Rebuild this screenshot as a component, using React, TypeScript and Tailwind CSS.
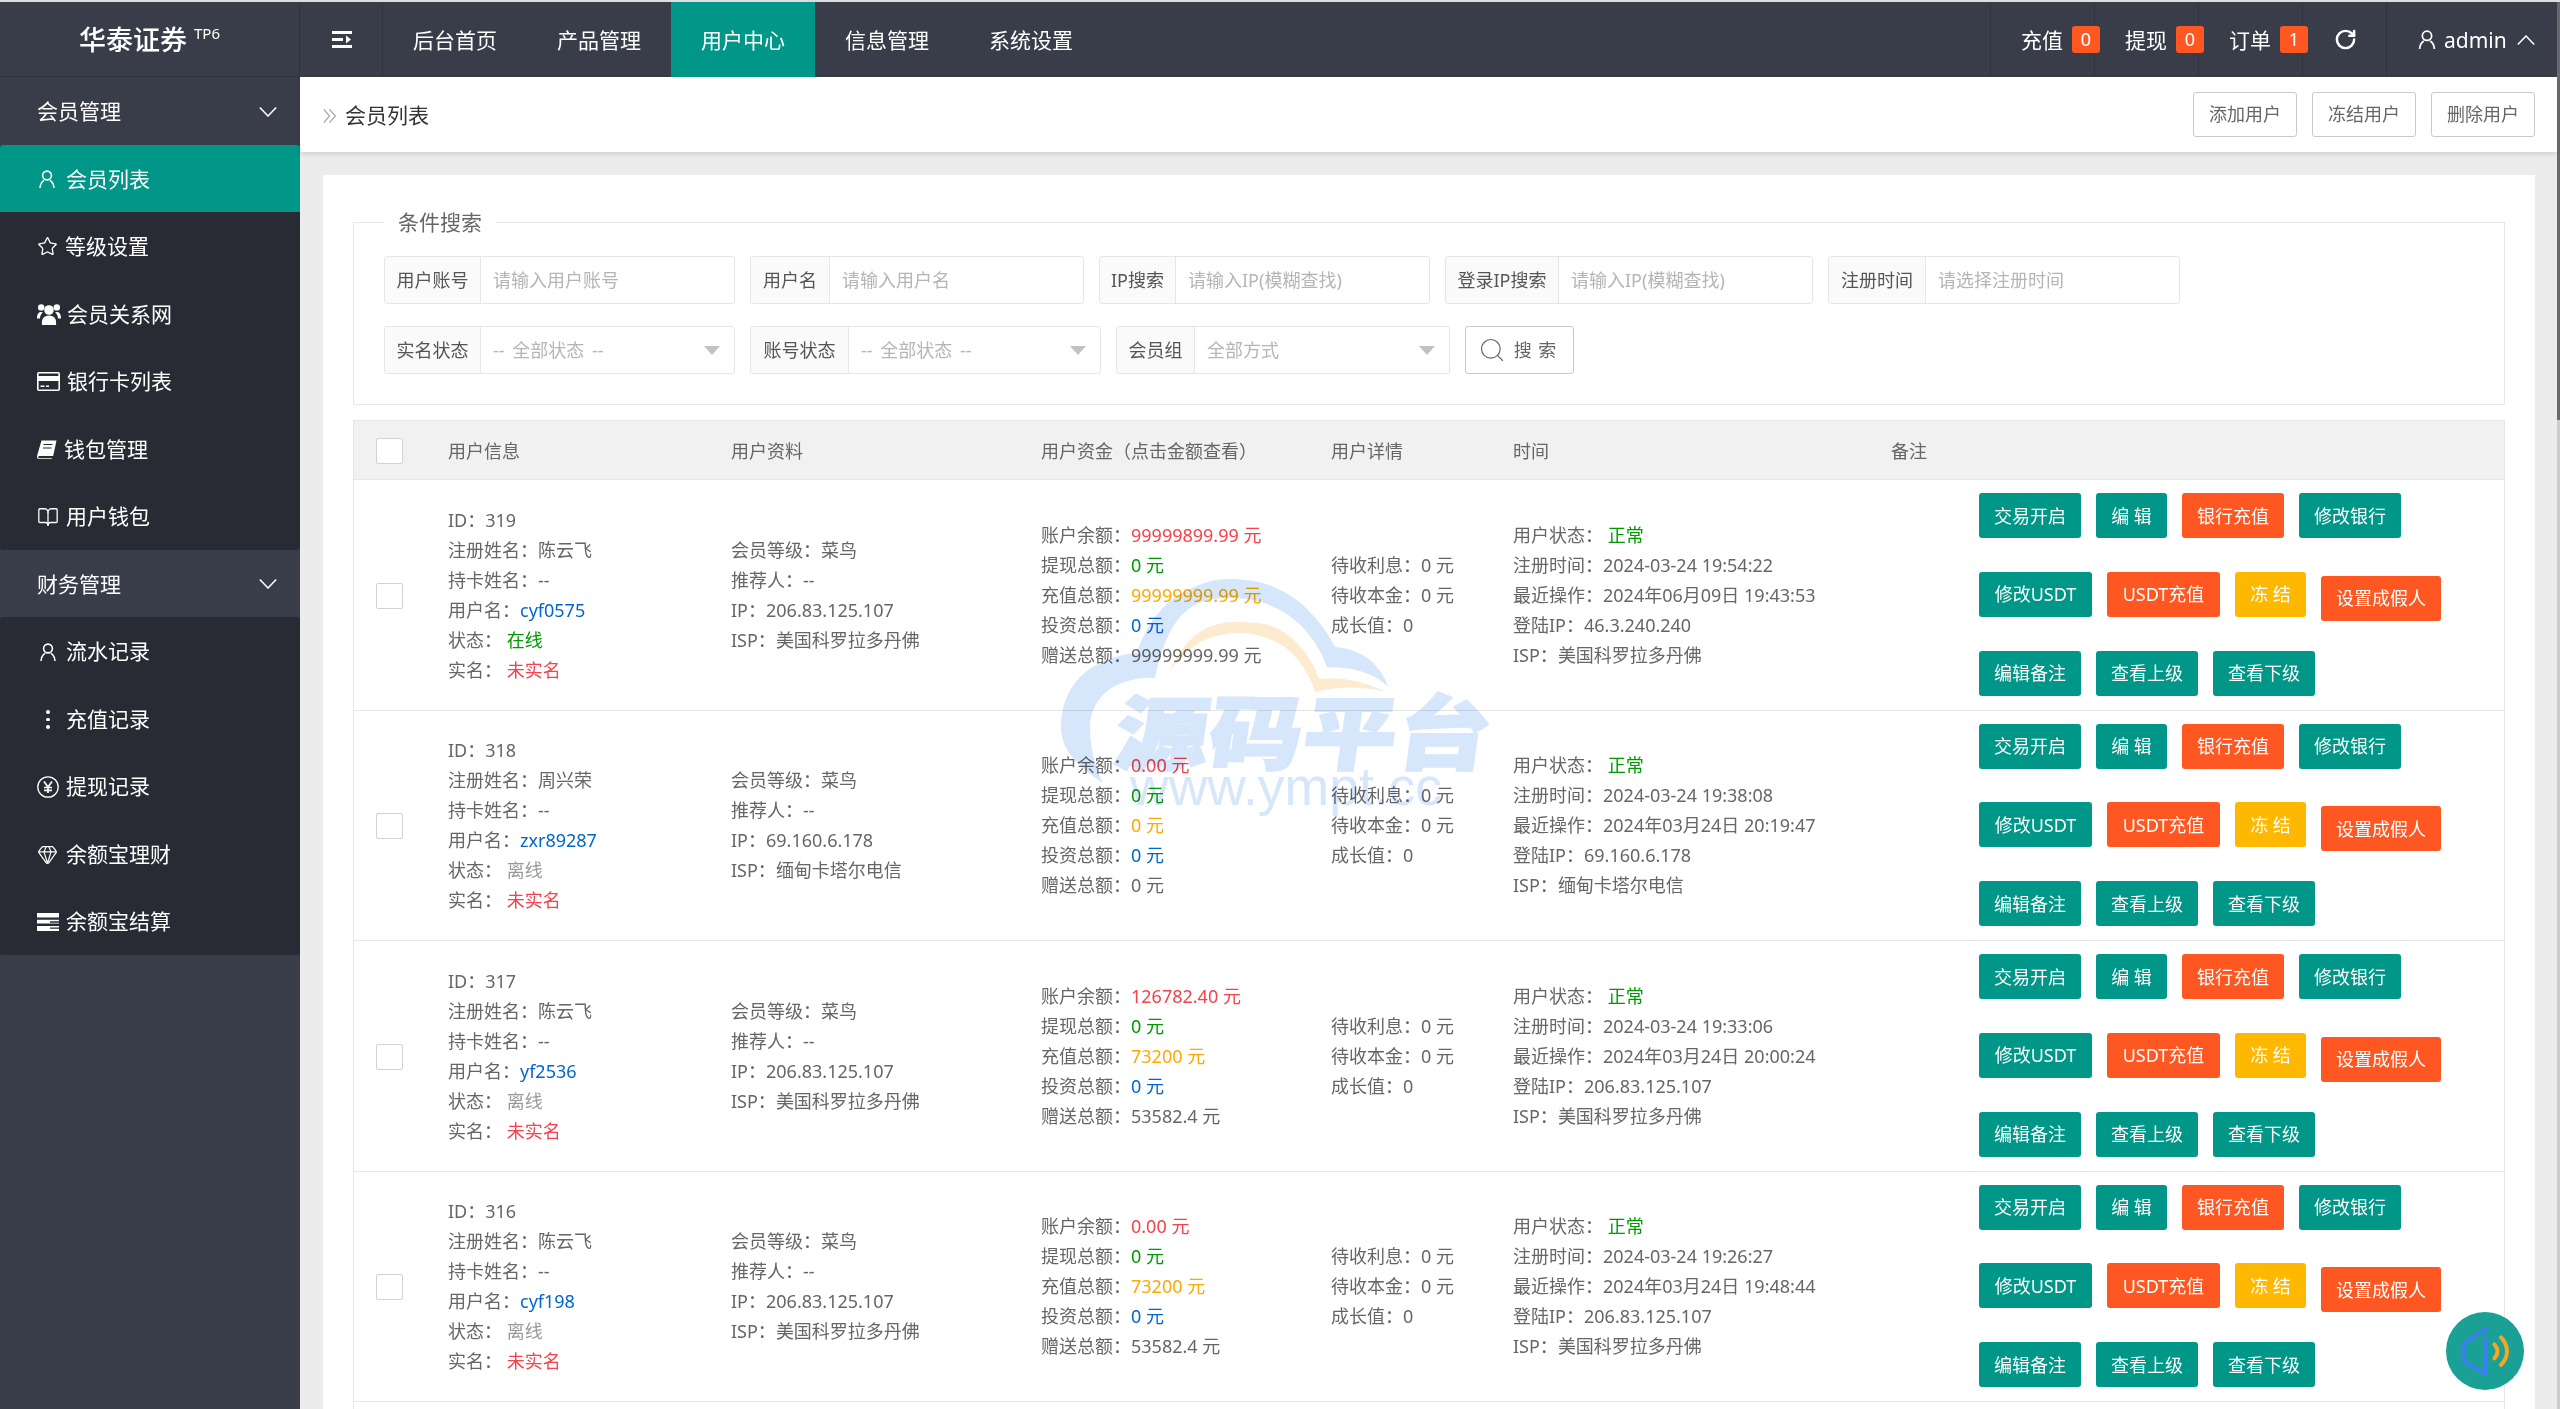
import { BookOpen, Gem, RotateCw, Search, Star } from 'lucide-react';
import type { ReactNode } from 'react';

type Member = {
  id: number;
  name: string;
  username: string;
  online: boolean;
  ip: string;
  isp: string;
  balance: string;
  deposit: string;
  gift: string;
  registered: string;
  lastAction: string;
  loginIp: string;
};

const members: Member[] = [
  {
    id: 319,
    name: '陈云飞',
    username: 'cyf0575',
    online: true,
    ip: '206.83.125.107',
    isp: '美国科罗拉多丹佛',
    balance: '99999899.99',
    deposit: '99999999.99',
    gift: '99999999.99',
    registered: '2024-03-24 19:54:22',
    lastAction: '2024年06月09日 19:43:53',
    loginIp: '46.3.240.240',
  },
  {
    id: 318,
    name: '周兴荣',
    username: 'zxr89287',
    online: false,
    ip: '69.160.6.178',
    isp: '缅甸卡塔尔电信',
    balance: '0.00',
    deposit: '0',
    gift: '0',
    registered: '2024-03-24 19:38:08',
    lastAction: '2024年03月24日 20:19:47',
    loginIp: '69.160.6.178',
  },
  {
    id: 317,
    name: '陈云飞',
    username: 'yf2536',
    online: false,
    ip: '206.83.125.107',
    isp: '美国科罗拉多丹佛',
    balance: '126782.40',
    deposit: '73200',
    gift: '53582.4',
    registered: '2024-03-24 19:33:06',
    lastAction: '2024年03月24日 20:00:24',
    loginIp: '206.83.125.107',
  },
  {
    id: 316,
    name: '陈云飞',
    username: 'cyf198',
    online: false,
    ip: '206.83.125.107',
    isp: '美国科罗拉多丹佛',
    balance: '0.00',
    deposit: '73200',
    gift: '53582.4',
    registered: '2024-03-24 19:26:27',
    lastAction: '2024年03月24日 19:48:44',
    loginIp: '206.83.125.107',
  },
];

function UserIcon({ className }: { className: string }) {
  return (
    <svg viewBox="0 0 16 18" fill="none" stroke="currentColor" strokeWidth="1.6" className={className}>
      <circle cx="8" cy="5.5" r="4.4" />
      <path d="M1 18c.2-3.6 1.6-6 4-7.6M15 18c-.2-3.6-1.6-6-4-7.6" />
    </svg>
  );
}

function UsersIcon() {
  return (
    <svg viewBox="0 0 24 22" fill="currentColor" className="h-[22px] w-[24px]">
      <circle cx="12" cy="7" r="4.8" />
      <circle cx="4.2" cy="4.4" r="3.2" />
      <circle cx="19.8" cy="4.4" r="3.2" />
      <path d="M5 22c-.8-6 1.6-9.6 7-9.6s7.800 3.600 7 9.600z" />
      <path d="M0 15.500c0-4 1.300-6.500 4-6.500 .8 0 1.500 .2 2 .6-1.800 1.300-3 3.400-3 5.900z" />
      <path d="M24 15.500c0-4-1.300-6.500-4-6.500-.8 0-1.500 .2-2 .6 1.800 1.300 3 3.400 3 5.900z" />
    </svg>
  );
}

function CardIcon() {
  return (
    <svg viewBox="0 0 23 19" className="h-[19px] w-[23px]">
      <rect x="0.8" y="0.8" width="21.400" height="17.400" rx="1" fill="none" stroke="currentColor" strokeWidth="1.6" />
      <rect x="1" y="4" width="21" height="5" fill="currentColor" />
      <rect x="3.500" y="13.500" width="4" height="1.500" fill="currentColor" />
      <rect x="9" y="13.500" width="3" height="1.500" fill="currentColor" />
    </svg>
  );
}

function WalletIcon() {
  return (
    <svg viewBox="0 0 20 19" className="h-[19px] w-[20px]">
      <path d="M4.500 0.500h15l-3.300 15.500H2.500c-.8 0-1.200 .6-1.200 1.200s.5 1 1.200 1H15l-.3 .8H2.200C.8 19 0 18.200 0 17c0-.5 .1-1 .2-1.500z" fill="currentColor" />
      <path d="M6.500 4.500h9M6 8h8.500" stroke="#282B33" strokeWidth="1.200" />
    </svg>
  );
}

function DotsIcon() {
  return (
    <span className="flex w-[22px] flex-col items-center gap-[4px]">
      <span className="h-[3.500px] w-[3.500px] rounded-full bg-white" />
      <span className="h-[3.500px] w-[3.500px] rounded-full bg-white" />
      <span className="h-[3.500px] w-[3.500px] rounded-full bg-white" />
    </span>
  );
}

function YenIcon() {
  return (
    <svg viewBox="0 0 22 22" fill="none" stroke="currentColor" className="h-[22px] w-[22px]">
      <circle cx="11" cy="11" r="10.200" strokeWidth="1.300" />
      <path d="M7 5.500l4 5.500 4-5.500M11 11v6M7 11.500h8M7 14.300h8" strokeWidth="1.700" />
    </svg>
  );
}

function ServerIcon() {
  return (
    <svg viewBox="0 0 22 18" fill="currentColor" className="h-[18px] w-[22px]">
      <rect x="0" y="0" width="22" height="4.500" />
      <path d="M0 6.700h22v1.600h-9v1.500h9v.7H0z" />
      <path d="M0 13h22v1.500h-9v1.200h9V18H0z" />
    </svg>
  );
}

function MenuToggleIcon() {
  return (
    <svg viewBox="0 0 20 17" fill="currentColor" className="ml-[1px] h-[17px] w-[20px]">
      <rect width="20" height="3" />
      <rect y="7" width="11" height="3" />
      <path d="M14 4.500l5 4-5 4z" />
      <rect y="14" width="20" height="3" />
    </svg>
  );
}

function Chevron({ up }: { up?: boolean }) {
  return (
    <svg viewBox="0 0 18 10" fill="none" stroke="currentColor" strokeWidth="1.500" className="h-[10px] w-[18px]">
      <path d={up ? 'M.8 9.500 9 1l8.200 8.500' : 'M.8 .5 9 9l8.200-8.500'} />
    </svg>
  );
}

const sideItems: { label: string; icon: ReactNode; slot: string; active?: boolean }[] = [
  { label: '会员列表', icon: <UserIcon className="ml-[2px] h-[18px] w-[16px]" />, slot: 'w-[29px]', active: true },
  { label: '等级设置', icon: <Star size={21} strokeWidth={1.500} />, slot: 'w-[28px]' },
  { label: '会员关系网', icon: <UsersIcon />, slot: 'w-[30px]' },
  { label: '银行卡列表', icon: <CardIcon />, slot: 'w-[30px]' },
  { label: '钱包管理', icon: <WalletIcon />, slot: 'w-[27px]' },
  { label: '用户钱包', icon: <BookOpen size={22} strokeWidth={1.400} />, slot: 'w-[29px]' },
];

const financeItems: { label: string; icon: ReactNode; slot: string }[] = [
  { label: '流水记录', icon: <UserIcon className="ml-[3px] h-[18px] w-[16px]" />, slot: 'w-[29px]' },
  { label: '充值记录', icon: <DotsIcon />, slot: 'w-[29px]' },
  { label: '提现记录', icon: <YenIcon />, slot: 'w-[29px]' },
  { label: '余额宝理财', icon: <Gem size={21} strokeWidth={1.400} />, slot: 'w-[29px]' },
  { label: '余额宝结算', icon: <ServerIcon />, slot: 'w-[29px]' },
];

function SideLink({ label, icon, slot, active }: { label: string; icon: ReactNode; slot: string; active?: boolean }) {
  return (
    <div className={`flex h-[67.5px] items-center pl-[37px] pt-[2px] text-white ${active ? 'bg-[#009688]' : ''}`}>
      <span className={`flex shrink-0 items-center ${slot}`}>{icon}</span>
      <span>{label}</span>
    </div>
  );
}

function SideGroup({ label }: { label: string }) {
  return (
    <div className="flex h-[67.5px] items-center justify-between pl-[37px] pr-[23px] pt-[2px] text-white">
      <span>{label}</span>
      <Chevron />
    </div>
  );
}

function Sidebar() {
  return (
    <aside className="w-[300px] shrink-0 bg-[#393D49] text-[21px]">
      <SideGroup label="会员管理" />
      <div className="overflow-hidden rounded-[3px] bg-[#282B33]">
        {sideItems.map((item) => (
          <SideLink key={item.label} {...item} />
        ))}
      </div>
      <SideGroup label="财务管理" />
      <div className="overflow-hidden rounded-[3px] bg-[#282B33]">
        {financeItems.map((item) => (
          <SideLink key={item.label} {...item} />
        ))}
      </div>
    </aside>
  );
}

function HeaderCount({ label, count }: { label: string; count: number }) {
  return (
    <div className="flex h-full w-[104px] shrink-0 items-center whitespace-nowrap border-l border-[#30333e] pl-[30px]">
      <span className="pt-[2px]">{label}</span>
      <span className="relative z-10 ml-[9px] h-[27px] w-[28px] shrink-0 rounded-[3px] bg-[#FF5722] text-center text-[18px] leading-[27px]">
        {count}
      </span>
    </div>
  );
}

function Header() {
  return (
    <header className="flex h-[75px] shrink-0 items-stretch bg-[#393D49] text-[21px] text-white">
      <div className="flex w-[300px] shrink-0 items-center justify-center border-b border-r border-[#30333e]">
        <span className="text-[27px] font-medium leading-none">华泰证券</span>
        <span className="mb-[12px] ml-[7px] text-[15px] leading-none">TP6</span>
      </div>
      <div className="flex w-[83px] shrink-0 items-center justify-center border-r border-[#30333e]">
        <MenuToggleIcon />
      </div>
      <nav className="flex">
        <a className="flex w-[144px] items-center justify-center pt-[2px]">后台首页</a>
        <a className="flex w-[144px] items-center justify-center pt-[2px]">产品管理</a>
        <a className="flex w-[144px] items-center justify-center bg-[#009688] pt-[2px]">用户中心</a>
        <a className="flex w-[144px] items-center justify-center pt-[2px]">信息管理</a>
        <a className="flex w-[144px] items-center justify-center pt-[2px]">系统设置</a>
      </nav>
      <div className="ml-auto flex">
        <HeaderCount label="充值" count={0} />
        <HeaderCount label="提现" count={0} />
        <HeaderCount label="订单" count={1} />
        <div className="flex w-[84px] items-center justify-center border-l border-[#30333e] pl-[1px]">
          <RotateCw size={23} strokeWidth={2.600} />
        </div>
        <div className="flex w-[171px] items-center border-l border-[#30333e] pl-[31px]">
          <UserIcon className="h-[19px] w-[18px]" />
          <span className="ml-[8px] pt-[2px]">admin</span>
          <span className="ml-[10px]">
            <Chevron up />
          </span>
        </div>
      </div>
    </header>
  );
}

function OutlineButton({ children }: { children: ReactNode }) {
  return (
    <button
      type="button"
      className="h-[45px] w-[104px] rounded-[3px] border border-[#c9c9c9] bg-white text-[18px] text-[#666]"
    >
      {children}
    </button>
  );
}

function Field({
  label,
  placeholder,
  width,
  labelWidth,
  select,
}: {
  label: string;
  placeholder: string;
  width: string;
  labelWidth: string;
  select?: boolean;
}) {
  return (
    <div className={`flex h-[48px] rounded-[3px] border border-[#e6e6e6] bg-white ${width}`}>
      <span
        className={`flex shrink-0 items-center justify-center rounded-l-[3px] border-r border-[#e6e6e6] bg-[#fafafa] text-[#555] ${labelWidth}`}
      >
        {label}
      </span>
      <span className="flex flex-1 items-center justify-between pl-[12px] pr-[14px] text-[#b5b5b5] [word-spacing:3px]">
        {placeholder}
        {select && (
          <span className="h-0 w-0 border-x-[8.500px] border-t-[9px] border-x-transparent border-t-[#c2c2c2]" />
        )}
      </span>
    </div>
  );
}

function SearchForm() {
  return (
    <fieldset className="border border-[#e6e6e6] pb-[30px] pl-[30px] pt-[19px]">
      <legend className="px-[14px] text-[21px] leading-[30px] text-[#666]">条件搜索</legend>
      <div className="flex gap-[15px]">
        <Field label="用户账号" placeholder="请输入用户账号" width="w-[351px]" labelWidth="w-[96px]" />
        <Field label="用户名" placeholder="请输入用户名" width="w-[334px]" labelWidth="w-[79px]" />
        <Field label="IP搜索" placeholder="请输入IP(模糊查找)" width="w-[331px]" labelWidth="w-[76px]" />
        <Field label="登录IP搜索" placeholder="请输入IP(模糊查找)" width="w-[368px]" labelWidth="w-[113px]" />
        <Field label="注册时间" placeholder="请选择注册时间" width="w-[352px]" labelWidth="w-[97px]" />
      </div>
      <div className="mt-[22px] flex gap-[15px]">
        <Field label="实名状态" placeholder="-- 全部状态 --" width="w-[351px]" labelWidth="w-[96px]" select />
        <Field label="账号状态" placeholder="-- 全部状态 --" width="w-[351px]" labelWidth="w-[98px]" select />
        <Field label="会员组" placeholder="全部方式" width="w-[334px]" labelWidth="w-[78px]" select />
        <button
          type="button"
          className="flex h-[48px] w-[109px] items-center justify-center gap-[8px] rounded-[3px] border border-[#c9c9c9] tracking-[1px] text-[#666]"
        >
          <Search size={28} strokeWidth={1} className="-ml-[4px]" />
          搜 索
        </button>
      </div>
    </fieldset>
  );
}

function Box({ className = '' }: { className?: string }) {
  return <span className={`ml-[22px] block h-[26px] w-[27px] rounded-[2px] border border-[#d2d2d2] bg-white ${className}`} />;
}

function ActionButton({ children, className }: { children: string; className: string }) {
  return (
    <button type="button" className={`h-[45px] shrink-0 rounded-[3px] text-center text-[18px] text-white ${className}`}>
      {children}
    </button>
  );
}

function ActionGroup() {
  return (
    <div className="flex flex-col gap-[33.750px] self-start pt-[13px]">
      <div className="flex gap-[15px]">
        <ActionButton className="w-[102px] bg-[#009688]">交易开启</ActionButton>
        <ActionButton className="w-[71px] bg-[#009688]">编 辑</ActionButton>
        <ActionButton className="w-[102px] bg-[#FF5722]">银行充值</ActionButton>
        <ActionButton className="w-[102px] bg-[#009688]">修改银行</ActionButton>
      </div>
      <div className="flex gap-[15px]">
        <ActionButton className="w-[113px] bg-[#009688]">修改USDT</ActionButton>
        <ActionButton className="w-[113px] bg-[#FF5722]">USDT充值</ActionButton>
        <ActionButton className="w-[71px] bg-[#FFB800]">冻 结</ActionButton>
        <ActionButton className="w-[120px] translate-y-[4px] bg-[#FF5722]">设置成假人</ActionButton>
      </div>
      <div className="flex gap-[15px]">
        <ActionButton className="w-[102px] bg-[#009688]">编辑备注</ActionButton>
        <ActionButton className="w-[102px] bg-[#009688]">查看上级</ActionButton>
        <ActionButton className="w-[102px] bg-[#009688]">查看下级</ActionButton>
      </div>
    </div>
  );
}

function MemberRow({ member }: { member: Member }) {
  return (
    <div className="grid h-[230.500px] grid-cols-[94px_283px_310px_290px_182px_466px_1fr] items-center border-b border-[#e6e6e6] leading-[30px] text-[#666]">
      <Box className="mt-[2px]" />
      <div>
        <p>ID：{member.id}</p>
        <p>注册姓名：{member.name}</p>
        <p>持卡姓名：--</p>
        <p>
          用户名：<span className="text-[#0066cc]">{member.username}</span>
        </p>
        <p>
          状态： <span className={member.online ? 'text-[#009900]' : 'text-[#999]'}>{member.online ? '在线' : '离线'}</span>
        </p>
        <p>
          实名： <span className="text-[#f5424c]">未实名</span>
        </p>
      </div>
      <div>
        <p>会员等级：菜鸟</p>
        <p>推荐人：--</p>
        <p>IP：{member.ip}</p>
        <p>ISP：{member.isp}</p>
      </div>
      <div>
        <p>
          账户余额：<span className="text-[#f5424c]">{member.balance} 元</span>
        </p>
        <p>
          提现总额：<span className="text-[#009900]">0 元</span>
        </p>
        <p>
          充值总额：<span className="text-[#ffa800]">{member.deposit} 元</span>
        </p>
        <p>
          投资总额：<span className="text-[#0066cc]">0 元</span>
        </p>
        <p>赠送总额：{member.gift} 元</p>
      </div>
      <div>
        <p>待收利息：0 元</p>
        <p>待收本金：0 元</p>
        <p>成长值：0</p>
      </div>
      <div className="whitespace-nowrap">
        <p>
          用户状态： <span className="text-[#009900]">正常</span>
        </p>
        <p>注册时间：{member.registered}</p>
        <p>最近操作：{member.lastAction}</p>
        <p>登陆IP：{member.loginIp}</p>
        <p>ISP：{member.isp}</p>
      </div>
      <ActionGroup />
    </div>
  );
}

function MemberTable() {
  return (
    <div className="mt-[15px] border-x border-[#e6e6e6] text-[18px]">
      <div className="grid h-[60px] grid-cols-[94px_283px_310px_290px_182px_378px_1fr] items-center border-y border-[#e6e6e6] bg-[#f1f1f1] pt-[2px] text-[#666]">
        <Box />
        <span>用户信息</span>
        <span>用户资料</span>
        <span>用户资金（点击金额查看）</span>
        <span>用户详情</span>
        <span>时间</span>
        <span>备注</span>
      </div>
      {members.map((member) => (
        <MemberRow key={member.id} member={member} />
      ))}
      <div className="h-[40px]" />
    </div>
  );
}

function Watermark() {
  return (
    <svg
      viewBox="0 0 470 270"
      className="pointer-events-none absolute left-[1040px] top-[570px] h-[270px] w-[470px] mix-blend-multiply"
    >
      <path
        d="M63 213C35 195 21 178 21 157C21 128 35 105 60 93C72 87 85 84 97 83C104 60 122 30 150 19C162 13 175 9 187 9C210 9 225 12 240 20C262 30 282 52 295 77C308 78 320 82 330 90C339 98 345 107 348 117C340 108 322 97 287 97C278 72 262 52 240 40C222 30 205 28 187 28C168 28 155 33 145 42C130 55 120 82 115 108C100 107 88 110 75 116C58 125 50 142 50 157C50 178 55 198 63 213Z"
        fill="#d6e6fb"
      />
      <path
        d="M129 102C138 82 150 66 167 58C178 53 187 52 197 52C215 52 228 53 240 60C258 70 272 88 279 109C300 106 328 112 345 122C325 116 298 116 275 122C270 105 258 85 240 74C225 66 213 63 200 63C185 63 172 66 160 72C148 80 138 90 129 102Z"
        fill="#fdebd0"
      />
      <text
        transform="translate(72 193) skewX(-8) scale(1.16 1)"
        fill="#d6e6fb"
        stroke="#d6e6fb"
        strokeWidth="2.500"
        fontSize="80"
        fontWeight="900"
        letterSpacing="1"
        fontFamily="'Noto Sans CJK SC', sans-serif"
      >
        源码平台
      </text>
      <text x="90" y="235" fill="#d6e6fb" fontSize="53.500" fontFamily="'Liberation Sans', sans-serif">
        www.ympt.cc
      </text>
    </svg>
  );
}

function SpeakerButton() {
  return (
    <div className="absolute left-[2446px] top-[1312px] h-[78px] w-[78px] rounded-full bg-[#1aa094]">
      <svg viewBox="0 0 234 234" fill="none" strokeWidth="12" strokeLinecap="round" strokeLinejoin="round" className="h-full w-full">
        <path d="M122 49 62 89c-7 5-10 9-10 16v34c0 7 3 11 10 15l58 32V79" stroke="#3b7ff0" />
        <path d="M145 97c13 14 13 28 0 42M165 76c24 26 24 58 0 83" stroke="#f5a623" />
      </svg>
    </div>
  );
}

export default function App() {
  return (
    <div className="relative flex h-[1409px] w-full flex-col overflow-hidden bg-[#ececec] font-['Noto_Sans','Noto_Sans_CJK_SC',sans-serif]">
      <div className="h-[2px] shrink-0 bg-[#dedede]" />
      <div className="flex min-h-0 flex-1">
        <div className="flex min-w-0 flex-1 flex-col">
          <Header />
          <div className="flex min-h-0 flex-1">
            <Sidebar />
            <main className="min-w-0 flex-1">
              <div className="flex h-[75px] items-center bg-white pl-[23px] pr-[22px] shadow-[0_2px_5px_rgba(0,0,0,0.12)]">
                <svg viewBox="0 0 14 14" fill="none" stroke="#a8a8a8" strokeWidth="1.200" className="mt-[2px] h-[14px] w-[14px]">
                  <path d="M1 .5 6.500 7 1 13.500M6.500 .5 12.500 7l-6 6.500" />
                </svg>
                <span className="ml-[8px] pt-[2px] text-[21px] text-[#333]">会员列表</span>
                <div className="ml-auto flex gap-[15px]">
                  <OutlineButton>添加用户</OutlineButton>
                  <OutlineButton>冻结用户</OutlineButton>
                  <OutlineButton>删除用户</OutlineButton>
                </div>
              </div>
              <section className="ml-[23px] mr-[22px] mt-[23px] bg-white px-[30px] pt-[32px] text-[18px]">
                <SearchForm />
                <MemberTable />
              </section>
            </main>
          </div>
        </div>
        <div className="flex w-[3px] shrink-0 flex-col">
          <div className="h-[418px] bg-[#696969]" />
          <div className="flex-1 bg-[#cdcdcd]" />
        </div>
      </div>
      <Watermark />
      <SpeakerButton />
    </div>
  );
}
